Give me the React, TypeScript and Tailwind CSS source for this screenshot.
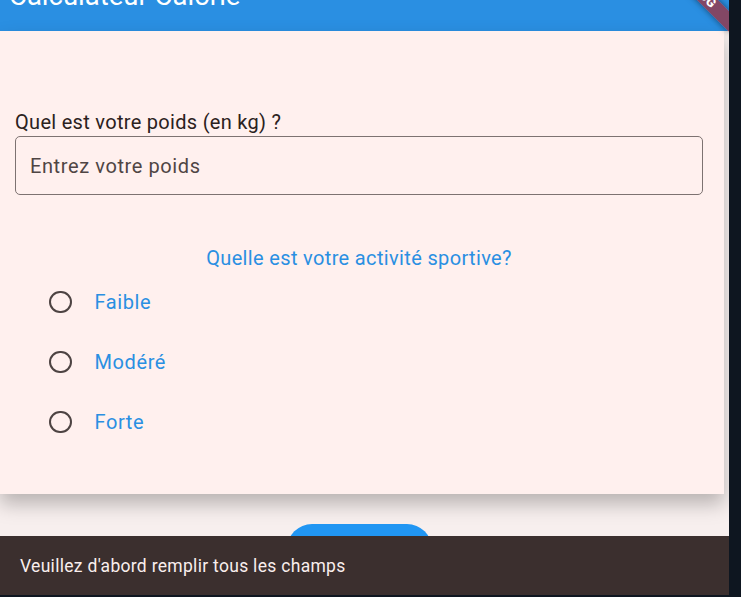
import React from 'react';

const levels = ['Faible', 'Modéré', 'Forte'];

function RadioRow({ label }: { label: string }) {
  return (
    <div className="h-[60px] flex items-center pl-[34px]">
      <div className="w-[22.5px] h-[22.5px] rounded-full border-[2.5px] border-[#4d4342] shrink-0" />
      <span className="ml-[23px] text-[20px] leading-[24px] tracking-[0.6px] text-[#2a8fe2]">{label}</span>
    </div>
  );
}

export default function App() {
  return (
    <div className="w-[741px] h-[597px] overflow-hidden flex bg-[#0e1620] font-['Roboto',sans-serif]">
      <div className="relative w-[729px] h-[595px] overflow-hidden bg-[#f7efee] flex flex-col">
        {/* App bar, scrolled partly out of view */}
        <header className="-mt-[39px] h-[70px] shrink-0 bg-[#2a8fe2] flex items-center pl-[9px]">
          <h1 className="text-[27.5px] leading-[32px] text-white">Calculateur Calorie</h1>
        </header>

        {/* Card */}
        <div className="w-[724px] bg-[#fff0ee] shadow-[0_10px_18px_rgba(0,0,0,0.25)] pt-[79px] pb-[42px] pl-[15px] pr-[21px]">
          <p className="text-[20px] leading-[24px] tracking-[0.3px] text-[#2b2120]">Quel est votre poids (en kg) ?</p>
          <div className="mt-[2px] h-[59px] rounded-[5px] border-[1.25px] border-[#7d7271] flex items-center pl-[14px]">
            <span className="text-[20px] leading-[24px] tracking-[0.6px] text-[#4f4544]">Entrez votre poids</span>
          </div>
          <p className="mt-[51px] text-center text-[20px] leading-[24px] tracking-[0.35px] text-[#2a8fe2]">
            Quelle est votre activité sportive?
          </p>
          <div className="mt-[2px] flex flex-col">
            {levels.map(l => (
              <RadioRow key={l} label={l} />
            ))}
          </div>
        </div>

        {/* Calculate button, partly hidden by the snackbar */}
        <div className="flex justify-center pr-[10px] mt-[30px]">
          <div className="w-[145px] h-[50px] rounded-full bg-[#2196f3]" />
        </div>

        {/* Snackbar */}
        <div className="absolute left-0 right-0 bottom-0 h-[59px] bg-[#3b2f2e] flex items-center pl-[20px]">
          <span className="text-[17.5px] leading-[22px] tracking-[0.3px] text-[#f9eeed]">Veuillez d'abord remplir tous les champs</span>
        </div>

        {/* Debug banner */}
        <div className="absolute left-[649px] top-[-16.5px] w-[100px] h-[15px] rotate-45 bg-[#b71c1c]/[0.63] shadow-[0_0_6px_rgba(0,0,0,0.5)] flex items-center justify-center">
          <span className="text-[12.75px] leading-none font-black text-white">DEBUG</span>
        </div>
      </div>
      <div className="flex-1" />
    </div>
  );
}
